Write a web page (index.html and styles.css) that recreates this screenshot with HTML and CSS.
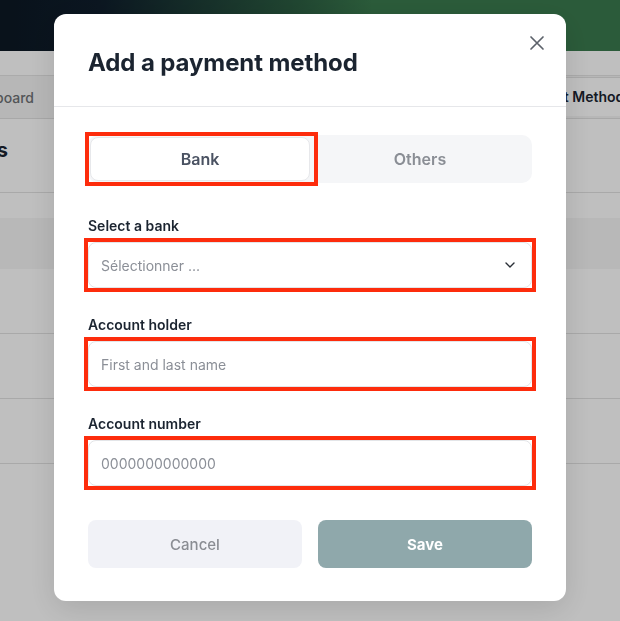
FILE: index.html
```html
<!DOCTYPE html>
<html lang="en">
<head>
<meta charset="UTF-8">
<meta name="viewport" content="width=device-width, initial-scale=1.0">
<title>Payment methods</title>
<link rel="stylesheet" href="styles.css">
</head>
<body>

<div class="topbar"></div>

<div class="page">
  <nav class="onglets">
    <a class="onglet">Dashboard</a>
    <a class="onglet">Transactions</a>
    <a class="onglet actif">Payment Methods</a>
  </nav>

  <div class="entete">
    <h2 class="titre-page">Payment methods</h2>
  </div>

  <div class="tableau">
    <div class="ligne tete"></div>
    <div class="ligne"></div>
    <div class="ligne"></div>
    <div class="ligne"></div>
  </div>
</div>

<div class="overlay">
  <div class="modal">
    <div class="modal-head">
      <h1>Add a payment method</h1>
      <button class="fermer" aria-label="Close">
        <svg width="16" height="16" viewBox="0 0 16 16"><path d="M2 2L14 14M14 2L2 14" stroke="#5d626b" stroke-width="1.7" stroke-linecap="round"/></svg>
      </button>
    </div>

    <div class="modal-body">
      <div class="choix">
        <div class="marque marque-onglet">
          <button class="choix-btn actif">Bank</button>
        </div>
        <button class="choix-btn">Others</button>
      </div>

      <div class="champ">
        <label>Select a bank</label>
        <div class="marque">
          <div class="input select">
            <span class="placeholder">Sélectionner ...</span>
            <svg width="10" height="6" viewBox="0 0 10 6"><path d="M1 1L5 5L9 1" fill="none" stroke="#2a2f37" stroke-width="1.4" stroke-linecap="round" stroke-linejoin="round"/></svg>
          </div>
        </div>
      </div>

      <div class="champ">
        <label>Account holder</label>
        <div class="marque">
          <input class="input" placeholder="First and last name">
        </div>
      </div>

      <div class="champ">
        <label>Account number</label>
        <div class="marque">
          <input class="input" placeholder="0000000000000">
        </div>
      </div>

      <div class="actions">
        <button class="btn annuler">Cancel</button>
        <button class="btn sauver">Save</button>
      </div>
    </div>
  </div>
</div>

</body>
</html>
```

FILE: styles.css
```css
* { margin: 0; padding: 0; box-sizing: border-box; }

body {
  font-family: Inter, 'Noto Sans', sans-serif;
  background: #fff;
  color: #1b2430;
  min-height: 100vh;
  overflow: hidden;
}

/* page derrière la modale */
.topbar {
  height: 51px;
  background: linear-gradient(90deg, #0c1824 0%, #0f1e2c 16%, #2c5e42 48%, #3a7a4e 60%, #3a7a4e 100%);
}

.page {
  margin-left: -200px;
  width: 849px;
  padding-top: 24px;
}

.onglets {
  display: flex;
  align-items: flex-end;
  height: 44px;
  padding-left: 145px;
  background: #f5f5f5;
  border-top: 1px solid #e4e4e4;
  border-bottom: 1px solid #e0e0e0;
}

.onglet {
  font-size: 14px;
  font-weight: 500;
  color: #6f7276;
  padding: 0 16px;
  line-height: 40px;
}

.onglet.actif {
  margin-left: auto;
  background: #fff;
  color: #1b2430;
  font-weight: 600;
  border: 1px solid #e2e2e2;
  border-bottom: none;
  border-radius: 6px 6px 0 0;
  line-height: 38px;
  margin-bottom: 2px;
}

.entete {
  height: 74px;
  display: flex;
  align-items: center;
  border-bottom: 1px solid #e2e2e2;
}

.titre-page {
  width: 208px;
  text-align: right;
  font-size: 20px;
  font-weight: 700;
  color: #1b2430;
  margin-top: -12px;
}

.tableau { margin-top: 25px; }

.ligne {
  height: 65px;
  border-bottom: 1px solid #e2e2e2;
}

.ligne.tete {
  height: 51px;
  background: #f6f6f6;
  border-bottom: none;
}

.overlay {
  position: fixed;
  inset: 0;
  background: rgba(0, 0, 0, 0.25);
  display: flex;
  justify-content: center;
  align-items: flex-start;
  padding-top: 14px;
}

/* modale */
.modal {
  position: relative;
  width: 512px;
  background: #fff;
  border-radius: 12px;
  box-shadow: 0 8px 30px rgba(0, 0, 0, 0.12);
}

.modal-head {
  padding: 33px 34px 27px;
  border-bottom: 1px solid #e6e7ea;
}

.modal-head h1 {
  font-size: 24px;
  line-height: 32px;
  font-weight: 700;
  color: #1b2430;
  letter-spacing: -0.1px;
}

.fermer {
  position: absolute;
  top: 21px;
  right: 21px;
  width: 16px;
  height: 16px;
  border: none;
  background: none;
  cursor: pointer;
  display: flex;
}

.modal-body {
  padding: 28px 34px 33px;
}

.choix {
  display: grid;
  grid-template-columns: 1fr 1fr;
  height: 48px;
  padding: 2px;
  background: #f5f6f8;
  border-radius: 10px;
}

.choix-btn {
  border: none;
  background: none;
  font-family: inherit;
  font-size: 16px;
  font-weight: 600;
  color: #8a8e95;
  border-radius: 8px;
  cursor: pointer;
}

.choix-btn.actif {
  width: 100%;
  height: 100%;
  background: #fff;
  color: #4a5262;
  border: 1px solid #e7e8eb;
}

.champ { margin-top: 27px; }
.choix + .champ { margin-top: 33px; }

.champ label {
  display: block;
  font-size: 14px;
  line-height: 20px;
  font-weight: 600;
  color: #1b2430;
  margin-bottom: 6px;
}

.input {
  display: flex;
  align-items: center;
  justify-content: space-between;
  width: 100%;
  height: 46px;
  padding: 0 12px;
  border: 1px solid #e3e5e8;
  border-radius: 8px;
  background: #fff;
  font-family: inherit;
  font-size: 14px;
  color: #1b2430;
}

.input::placeholder,
.placeholder {
  color: #8b8f97;
}

.select svg { margin-right: 4px; }

/* cadres rouges d'annotation */
.marque {
  border: 4px solid #fd2c0c;
  margin: -4px;
}

.marque-onglet {
  margin: -5px -8px -5px -5px;
  padding: 1px 4px 1px 1px;
}

.actions {
  display: grid;
  grid-template-columns: 1fr 1fr;
  gap: 16px;
  margin-top: 34px;
}

.btn {
  height: 48px;
  border: none;
  border-radius: 8px;
  font-family: inherit;
  font-size: 15px;
  cursor: pointer;
}

.annuler {
  background: #f1f2f7;
  color: #8a8d93;
  font-weight: 500;
}

.sauver {
  background: #8fa8ab;
  color: #fff;
  font-weight: 700;
}
```
